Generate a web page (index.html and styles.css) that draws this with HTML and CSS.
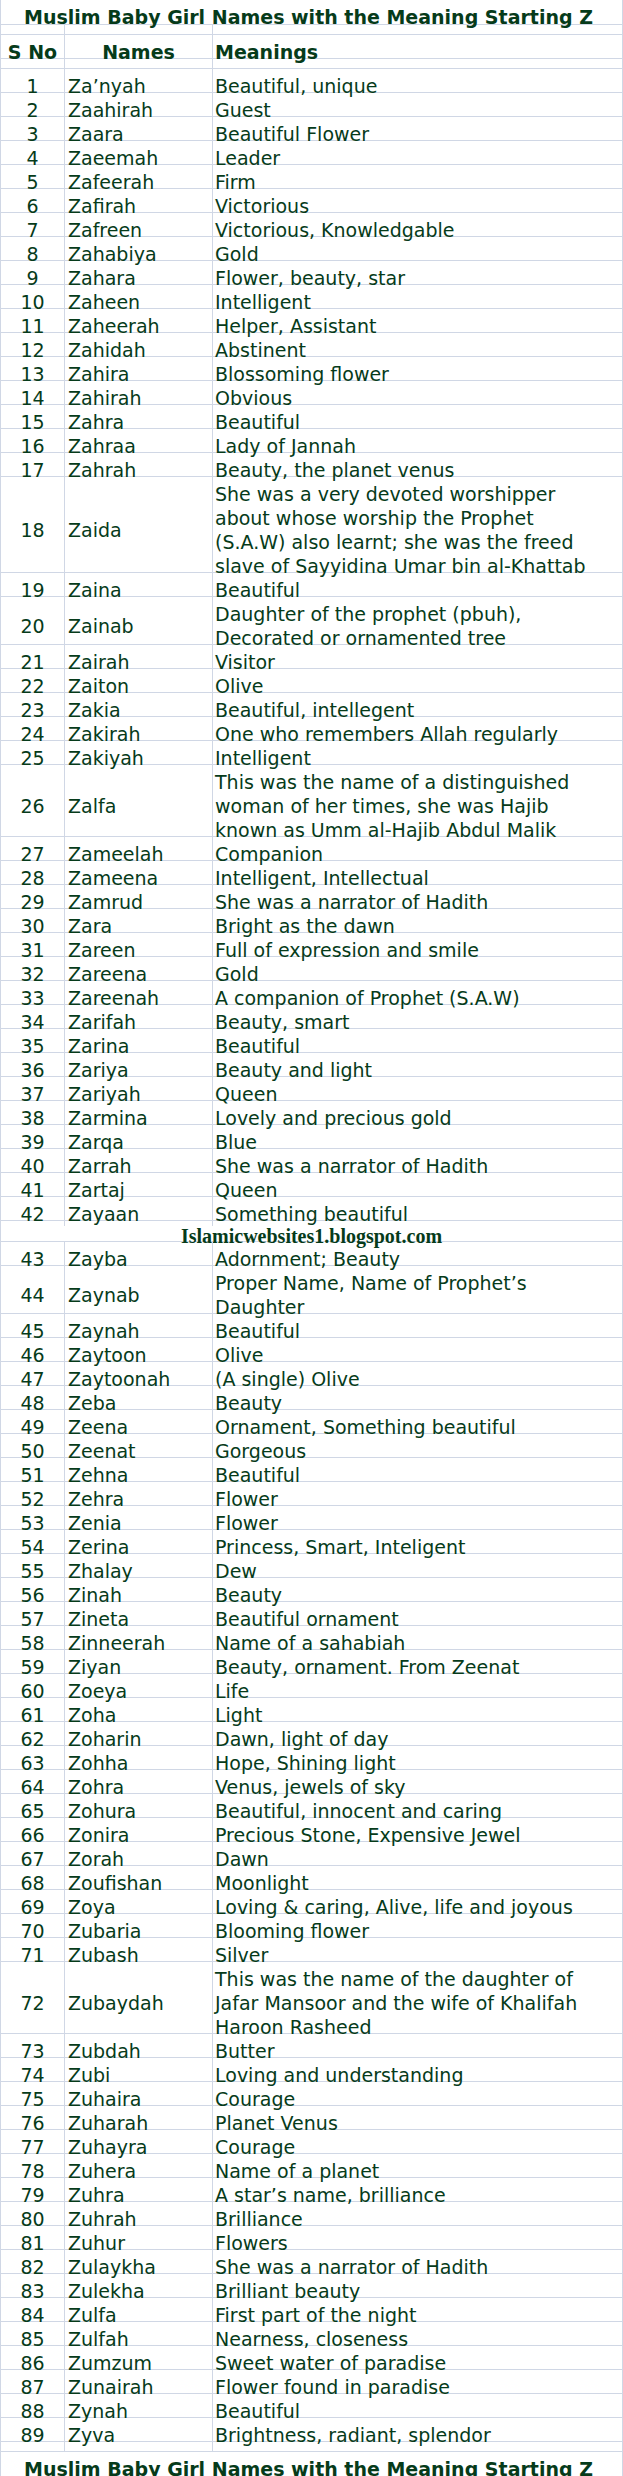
FILE: index.html
```html
<!DOCTYPE html>
<html lang="en">
<head>
<meta charset="utf-8">
<title>Muslim Baby Girl Names with the Meaning Starting Z</title>
<link rel="stylesheet" href="styles.css">
</head>
<body>
<div class="sheet">
  <div class="row title"><div class="c full">Muslim Baby Girl Names with the Meaning Starting Z</div></div>
  <div class="row gap"><div class="c"></div><div class="c"></div><div class="c"></div></div>
  <div class="row head"><div class="c n">S No</div><div class="c nm ctr">Names</div><div class="c m">Meanings</div></div>
  <div class="row gap"><div class="c"></div><div class="c"></div><div class="c"></div></div>

  <div class="row"><div class="c n">1</div><div class="c nm">Za’nyah</div><div class="c m">Beautiful, unique</div></div>
  <div class="row"><div class="c n">2</div><div class="c nm">Zaahirah</div><div class="c m">Guest</div></div>
  <div class="row"><div class="c n">3</div><div class="c nm">Zaara</div><div class="c m">Beautiful Flower</div></div>
  <div class="row"><div class="c n">4</div><div class="c nm">Zaeemah</div><div class="c m">Leader</div></div>
  <div class="row"><div class="c n">5</div><div class="c nm">Zafeerah</div><div class="c m">Firm</div></div>
  <div class="row"><div class="c n">6</div><div class="c nm">Zafirah</div><div class="c m">Victorious</div></div>
  <div class="row"><div class="c n">7</div><div class="c nm">Zafreen</div><div class="c m">Victorious, Knowledgable</div></div>
  <div class="row"><div class="c n">8</div><div class="c nm">Zahabiya</div><div class="c m">Gold</div></div>
  <div class="row"><div class="c n">9</div><div class="c nm">Zahara</div><div class="c m">Flower, beauty, star</div></div>
  <div class="row"><div class="c n">10</div><div class="c nm">Zaheen</div><div class="c m">Intelligent</div></div>
  <div class="row"><div class="c n">11</div><div class="c nm">Zaheerah</div><div class="c m">Helper, Assistant</div></div>
  <div class="row"><div class="c n">12</div><div class="c nm">Zahidah</div><div class="c m">Abstinent</div></div>
  <div class="row"><div class="c n">13</div><div class="c nm">Zahira</div><div class="c m">Blossoming flower</div></div>
  <div class="row"><div class="c n">14</div><div class="c nm">Zahirah</div><div class="c m">Obvious</div></div>
  <div class="row"><div class="c n">15</div><div class="c nm">Zahra</div><div class="c m">Beautiful</div></div>
  <div class="row"><div class="c n">16</div><div class="c nm">Zahraa</div><div class="c m">Lady of Jannah</div></div>
  <div class="row"><div class="c n">17</div><div class="c nm">Zahrah</div><div class="c m">Beauty, the planet venus</div></div>
  <div class="row l4"><div class="c n">18</div><div class="c nm">Zaida</div><div class="c m">She was a very devoted worshipper<br>about whose worship the Prophet<br>(S.A.W) also learnt; she was the freed<br>slave of Sayyidina Umar bin al-Khattab</div></div>
  <div class="row"><div class="c n">19</div><div class="c nm">Zaina</div><div class="c m">Beautiful</div></div>
  <div class="row l2"><div class="c n">20</div><div class="c nm">Zainab</div><div class="c m">Daughter of the prophet (pbuh),<br>Decorated or ornamented tree</div></div>
  <div class="row"><div class="c n">21</div><div class="c nm">Zairah</div><div class="c m">Visitor</div></div>
  <div class="row"><div class="c n">22</div><div class="c nm">Zaiton</div><div class="c m">Olive</div></div>
  <div class="row"><div class="c n">23</div><div class="c nm">Zakia</div><div class="c m">Beautiful, intellegent</div></div>
  <div class="row"><div class="c n">24</div><div class="c nm">Zakirah</div><div class="c m">One who remembers Allah regularly</div></div>
  <div class="row"><div class="c n">25</div><div class="c nm">Zakiyah</div><div class="c m">Intelligent</div></div>
  <div class="row l3"><div class="c n">26</div><div class="c nm">Zalfa</div><div class="c m">This was the name of a distinguished<br>woman of her times, she was Hajib<br>known as Umm al-Hajib Abdul Malik</div></div>
  <div class="row"><div class="c n">27</div><div class="c nm">Zameelah</div><div class="c m">Companion</div></div>
  <div class="row"><div class="c n">28</div><div class="c nm">Zameena</div><div class="c m">Intelligent, Intellectual</div></div>
  <div class="row"><div class="c n">29</div><div class="c nm">Zamrud</div><div class="c m">She was a narrator of Hadith</div></div>
  <div class="row"><div class="c n">30</div><div class="c nm">Zara</div><div class="c m">Bright as the dawn</div></div>
  <div class="row"><div class="c n">31</div><div class="c nm">Zareen</div><div class="c m">Full of expression and smile</div></div>
  <div class="row"><div class="c n">32</div><div class="c nm">Zareena</div><div class="c m">Gold</div></div>
  <div class="row"><div class="c n">33</div><div class="c nm">Zareenah</div><div class="c m">A companion of Prophet (S.A.W)</div></div>
  <div class="row"><div class="c n">34</div><div class="c nm">Zarifah</div><div class="c m">Beauty, smart</div></div>
  <div class="row"><div class="c n">35</div><div class="c nm">Zarina</div><div class="c m">Beautiful</div></div>
  <div class="row"><div class="c n">36</div><div class="c nm">Zariya</div><div class="c m">Beauty and light</div></div>
  <div class="row"><div class="c n">37</div><div class="c nm">Zariyah</div><div class="c m">Queen</div></div>
  <div class="row"><div class="c n">38</div><div class="c nm">Zarmina</div><div class="c m">Lovely and precious gold</div></div>
  <div class="row"><div class="c n">39</div><div class="c nm">Zarqa</div><div class="c m">Blue</div></div>
  <div class="row"><div class="c n">40</div><div class="c nm">Zarrah</div><div class="c m">She was a narrator of Hadith</div></div>
  <div class="row"><div class="c n">41</div><div class="c nm">Zartaj</div><div class="c m">Queen</div></div>
  <div class="row"><div class="c n">42</div><div class="c nm">Zayaan</div><div class="c m">Something beautiful</div></div>

  <div class="row blog"><div class="c full">Islamicwebsites1.blogspot.com</div></div>

  <div class="row"><div class="c n">43</div><div class="c nm">Zayba</div><div class="c m">Adornment; Beauty</div></div>
  <div class="row l2"><div class="c n">44</div><div class="c nm">Zaynab</div><div class="c m">Proper Name, Name of Prophet’s<br>Daughter</div></div>
  <div class="row"><div class="c n">45</div><div class="c nm">Zaynah</div><div class="c m">Beautiful</div></div>
  <div class="row"><div class="c n">46</div><div class="c nm">Zaytoon</div><div class="c m">Olive</div></div>
  <div class="row"><div class="c n">47</div><div class="c nm">Zaytoonah</div><div class="c m">(A single) Olive</div></div>
  <div class="row"><div class="c n">48</div><div class="c nm">Zeba</div><div class="c m">Beauty</div></div>
  <div class="row"><div class="c n">49</div><div class="c nm">Zeena</div><div class="c m">Ornament, Something beautiful</div></div>
  <div class="row"><div class="c n">50</div><div class="c nm">Zeenat</div><div class="c m">Gorgeous</div></div>
  <div class="row"><div class="c n">51</div><div class="c nm">Zehna</div><div class="c m">Beautiful</div></div>
  <div class="row"><div class="c n">52</div><div class="c nm">Zehra</div><div class="c m">Flower</div></div>
  <div class="row"><div class="c n">53</div><div class="c nm">Zenia</div><div class="c m">Flower</div></div>
  <div class="row"><div class="c n">54</div><div class="c nm">Zerina</div><div class="c m">Princess, Smart, Inteligent</div></div>
  <div class="row"><div class="c n">55</div><div class="c nm">Zhalay</div><div class="c m">Dew</div></div>
  <div class="row"><div class="c n">56</div><div class="c nm">Zinah</div><div class="c m">Beauty</div></div>
  <div class="row"><div class="c n">57</div><div class="c nm">Zineta</div><div class="c m">Beautiful ornament</div></div>
  <div class="row"><div class="c n">58</div><div class="c nm">Zinneerah</div><div class="c m">Name of a sahabiah</div></div>
  <div class="row"><div class="c n">59</div><div class="c nm">Ziyan</div><div class="c m">Beauty, ornament. From Zeenat</div></div>
  <div class="row"><div class="c n">60</div><div class="c nm">Zoeya</div><div class="c m">Life</div></div>
  <div class="row"><div class="c n">61</div><div class="c nm">Zoha</div><div class="c m">Light</div></div>
  <div class="row"><div class="c n">62</div><div class="c nm">Zoharin</div><div class="c m">Dawn, light of day</div></div>
  <div class="row"><div class="c n">63</div><div class="c nm">Zohha</div><div class="c m">Hope, Shining light</div></div>
  <div class="row"><div class="c n">64</div><div class="c nm">Zohra</div><div class="c m">Venus, jewels of sky</div></div>
  <div class="row"><div class="c n">65</div><div class="c nm">Zohura</div><div class="c m">Beautiful, innocent and caring</div></div>
  <div class="row"><div class="c n">66</div><div class="c nm">Zonira</div><div class="c m">Precious Stone, Expensive Jewel</div></div>
  <div class="row"><div class="c n">67</div><div class="c nm">Zorah</div><div class="c m">Dawn</div></div>
  <div class="row"><div class="c n">68</div><div class="c nm">Zoufishan</div><div class="c m">Moonlight</div></div>
  <div class="row"><div class="c n">69</div><div class="c nm">Zoya</div><div class="c m">Loving &amp; caring, Alive, life and joyous</div></div>
  <div class="row"><div class="c n">70</div><div class="c nm">Zubaria</div><div class="c m">Blooming flower</div></div>
  <div class="row"><div class="c n">71</div><div class="c nm">Zubash</div><div class="c m">Silver</div></div>
  <div class="row l3"><div class="c n">72</div><div class="c nm">Zubaydah</div><div class="c m">This was the name of the daughter of<br>Jafar Mansoor and the wife of Khalifah<br>Haroon Rasheed</div></div>
  <div class="row"><div class="c n">73</div><div class="c nm">Zubdah</div><div class="c m">Butter</div></div>
  <div class="row"><div class="c n">74</div><div class="c nm">Zubi</div><div class="c m">Loving and understanding</div></div>
  <div class="row"><div class="c n">75</div><div class="c nm">Zuhaira</div><div class="c m">Courage</div></div>
  <div class="row"><div class="c n">76</div><div class="c nm">Zuharah</div><div class="c m">Planet Venus</div></div>
  <div class="row"><div class="c n">77</div><div class="c nm">Zuhayra</div><div class="c m">Courage</div></div>
  <div class="row"><div class="c n">78</div><div class="c nm">Zuhera</div><div class="c m">Name of a planet</div></div>
  <div class="row"><div class="c n">79</div><div class="c nm">Zuhra</div><div class="c m">A star’s name, brilliance</div></div>
  <div class="row"><div class="c n">80</div><div class="c nm">Zuhrah</div><div class="c m">Brilliance</div></div>
  <div class="row"><div class="c n">81</div><div class="c nm">Zuhur</div><div class="c m">Flowers</div></div>
  <div class="row"><div class="c n">82</div><div class="c nm">Zulaykha</div><div class="c m">She was a narrator of Hadith</div></div>
  <div class="row"><div class="c n">83</div><div class="c nm">Zulekha</div><div class="c m">Brilliant beauty</div></div>
  <div class="row"><div class="c n">84</div><div class="c nm">Zulfa</div><div class="c m">First part of the night</div></div>
  <div class="row"><div class="c n">85</div><div class="c nm">Zulfah</div><div class="c m">Nearness, closeness</div></div>
  <div class="row"><div class="c n">86</div><div class="c nm">Zumzum</div><div class="c m">Sweet water of paradise</div></div>
  <div class="row"><div class="c n">87</div><div class="c nm">Zunairah</div><div class="c m">Flower found in paradise</div></div>
  <div class="row"><div class="c n">88</div><div class="c nm">Zynah</div><div class="c m">Beautiful</div></div>
  <div class="row"><div class="c n">89</div><div class="c nm">Zyva</div><div class="c m">Brightness, radiant, splendor</div></div>

  <div class="row gap"><div class="c"></div><div class="c"></div><div class="c"></div></div>
  <div class="row title"><div class="c full">Muslim Baby Girl Names with the Meaning Starting Z</div></div>
</div>
</body>
</html>
```

FILE: styles.css
```css
html, body {
  margin: 0;
  padding: 0;
  background: #ffffff;
}

body {
  font-family: "DejaVu Sans", Verdana, sans-serif;
  font-size: 19px;
  color: #063b1a;
}

.sheet {
  width: 623px;
  box-sizing: border-box;
  border-left: 1px solid #d0d7e5;
  border-right: 1px solid #d0d7e5;
}

.row {
  display: grid;
  grid-template-columns: 63px 148px 1fr;
  height: 24px;
  box-sizing: border-box;
  border-bottom: 1px solid #d0d7e5;
}

.row.l2 { height: 48px; }
.row.l3 { height: 72px; }
.row.l4 { height: 96px; }

.row.gap { height: 10px; }
.row.title { height: 25px; }
.row.blog { height: 21px; }

.c {
  display: flex;
  align-items: center;
  box-sizing: border-box;
  padding-top: 5px;
  line-height: 24px;
  white-space: nowrap;
  min-width: 0;
}

.c + .c {
  border-left: 1px solid #d0d7e5;
}

.row.gap .c {
  padding-top: 0;
}

.n {
  justify-content: center;
}

.nm {
  padding-left: 3px;
}

.m {
  padding-left: 2px;
}

.ctr {
  justify-content: center;
  padding-left: 0;
}

.head .c {
  font-weight: bold;
}

.full {
  grid-column: 1 / -1;
  justify-content: center;
}

.title .full {
  font-weight: bold;
  padding-right: 6px;
}

.blog .full {
  font-family: "Liberation Serif", "Times New Roman", serif;
  font-weight: bold;
  font-size: 20px;
  padding-top: 3px;
}
```
